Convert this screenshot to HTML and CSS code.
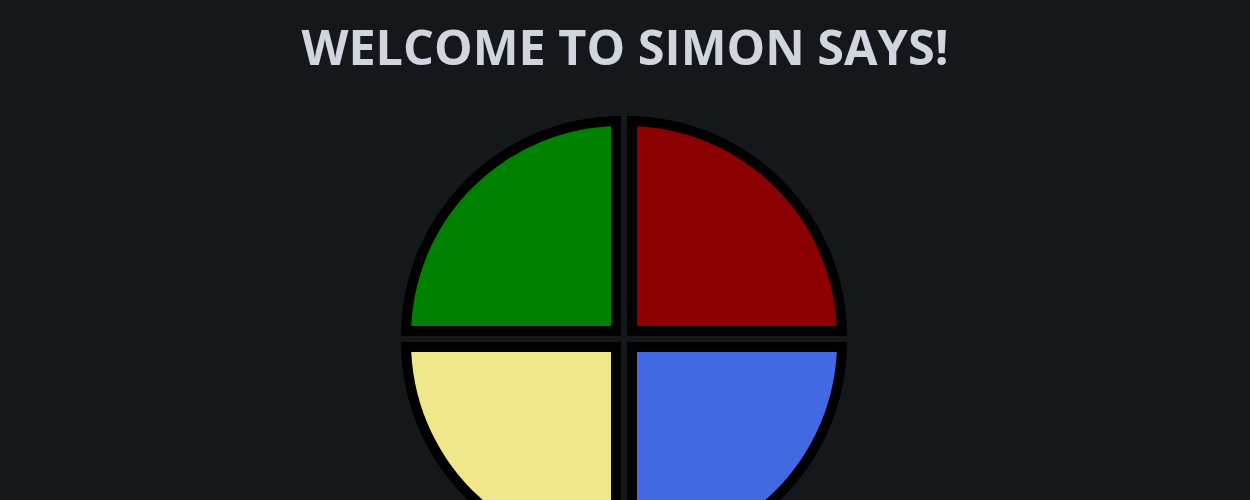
FILE: index.html
```html
<!DOCTYPE html>
<html lang="en">
<head>
<meta charset="utf-8">
<title>Simon Says</title>
<link rel="stylesheet" href="styles.css">
</head>
<body>
<h1 class="title">WELCOME TO SIMON SAYS!</h1>
<div class="board">
  <div class="pad pad-green"></div>
  <div class="pad pad-red"></div>
  <div class="pad pad-yellow"></div>
  <div class="pad pad-blue"></div>
</div>
</body>
</html>
```
FILE: styles.css
```css
html, body {
  margin: 0;
  padding: 0;
  background: #15181b;
}
body {
  font-family: "Open Sans", "DejaVu Sans", sans-serif;
  color: #d0d6de;
}
.title {
  margin: 0;
  padding-top: 16px;
  height: 100px;
  box-sizing: border-box;
  text-align: center;
  font-size: 48.6px;
  font-weight: 700;
  line-height: 60px;
  letter-spacing: 0;
}
.board {
  display: grid;
  grid-template-columns: 220px 220px;
  grid-auto-rows: 220px;
  gap: 6px;
  justify-content: center;
  margin-top: 16px;
  padding-right: 2px;
}
.pad {
  box-sizing: border-box;
  border: 10px solid #000;
}
.pad-green { background: #008000; border-top-left-radius: 100%; }
.pad-red { background: #8b0000; border-top-right-radius: 100%; }
.pad-yellow { background: #f0e68c; border-bottom-left-radius: 100%; }
.pad-blue { background: #4169e1; border-bottom-right-radius: 100%; }
```
